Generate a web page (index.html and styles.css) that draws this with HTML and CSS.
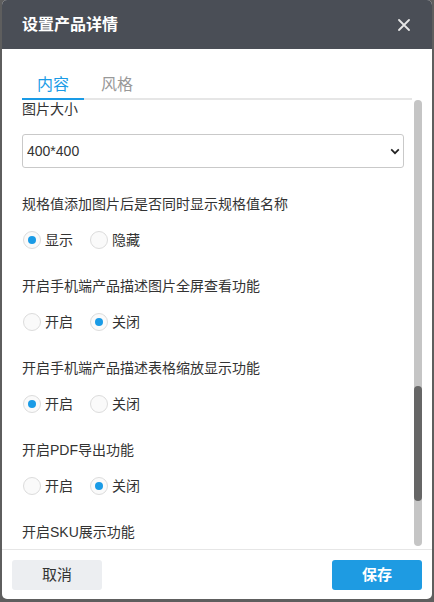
FILE: index.html
```html
<!DOCTYPE html>
<html lang="zh-CN">
<head>
<meta charset="utf-8">
<title>设置产品详情</title>
<link rel="stylesheet" href="styles.css">
</head>
<body>
<div class="dialog">
  <div class="dialog-header">
    <h1 class="dialog-title">设置产品详情</h1>
    <button class="close-btn" aria-label="关闭">
      <svg width="12" height="12" viewBox="0 0 12 12"><path d="M1 1L11 11M11 1L1 11" stroke="#e6e6e6" stroke-width="1.8" stroke-linecap="round"/></svg>
    </button>
  </div>
  <div class="tabs">
    <div class="tab active">内容</div>
    <div class="tab">风格</div>
  </div>
  <div class="scroll-area">
    <div class="content">
      <div class="field first">
        <div class="label">图片大小</div>
        <div class="select-wrap">
          <select class="select"><option>400*400</option></select>
          <svg class="chevron" width="10" height="7" viewBox="0 0 10 7"><path d="M1.2 1.4L5 5.2L8.8 1.4" fill="none" stroke="#222" stroke-width="1.7"/></svg>
        </div>
      </div>
      <div class="field">
        <div class="label">规格值添加图片后是否同时显示规格值名称</div>
        <div class="radios">
          <label class="radio"><span class="dot checked"></span>显示</label>
          <label class="radio"><span class="dot"></span>隐藏</label>
        </div>
      </div>
      <div class="field">
        <div class="label">开启手机端产品描述图片全屏查看功能</div>
        <div class="radios">
          <label class="radio"><span class="dot"></span>开启</label>
          <label class="radio"><span class="dot checked"></span>关闭</label>
        </div>
      </div>
      <div class="field">
        <div class="label">开启手机端产品描述表格缩放显示功能</div>
        <div class="radios">
          <label class="radio"><span class="dot checked"></span>开启</label>
          <label class="radio"><span class="dot"></span>关闭</label>
        </div>
      </div>
      <div class="field">
        <div class="label">开启PDF导出功能</div>
        <div class="radios">
          <label class="radio"><span class="dot"></span>开启</label>
          <label class="radio"><span class="dot checked"></span>关闭</label>
        </div>
      </div>
      <div class="field">
        <div class="label">开启SKU展示功能</div>
      </div>
    </div>
    <div class="scrollbar"><div class="thumb"></div></div>
  </div>
  <div class="dialog-footer">
    <div class="btn btn-cancel" role="button">取消</div>
    <div class="btn btn-save" role="button">保存</div>
  </div>
</div>
</body>
</html>
```
FILE: styles.css
```css
* { box-sizing: border-box; }
html, body { margin: 0; padding: 0; }
body {
  background: #5e5e5e;
  font-family: "Liberation Sans", "Noto Sans CJK SC", sans-serif;
  color: #333;
  height: 602px;
  overflow: hidden;
}
.dialog {
  margin: 0 2px;
  width: 430px;
  height: 599px;
  background: #fff;
  border-radius: 5px;
  overflow: hidden;
  display: flex;
  flex-direction: column;
}
.dialog-header {
  height: 49px;
  flex: none;
  background: #4a4e56;
  display: flex;
  align-items: center;
  justify-content: space-between;
  padding: 0 22px 0 20px;
}
.dialog-title {
  margin: 0;
  font-size: 16px;
  font-weight: bold;
  color: #fff;
  line-height: 20px;
}
.close-btn {
  border: 0;
  background: none;
  padding: 0;
  width: 12px;
  height: 12px;
  display: flex;
}
.tabs {
  flex: none;
  margin: 0 20px;
  padding-top: 24px;
  display: flex;
  gap: 2px;
  border-bottom: 2px solid #e6e6e6;
}
.tab {
  font-size: 16px;
  line-height: 24px;
  padding: 0 15px 1px;
  color: #999;
  margin-bottom: -2px;
  border-bottom: 2px solid transparent;
}
.tab.active {
  color: #1a9be6;
  border-bottom-color: #1a9be6;
}
.scroll-area {
  flex: 1;
  position: relative;
  overflow: hidden;
}
.content {
  padding: 0 28px 0 20px;
}
.field { margin-bottom: 26px; }
.label {
  font-size: 14px;
  line-height: 20px;
  color: #333;
}
.field.first .label { margin-top: -1px; }
.select-wrap {
  position: relative;
  margin-top: 15px;
}
.select {
  appearance: none;
  -webkit-appearance: none;
  width: 100%;
  height: 34px;
  border: 1px solid #c9c9c9;
  border-radius: 3px;
  background: #fff;
  font-family: "Liberation Sans", "Noto Sans CJK SC", sans-serif;
  font-size: 14px;
  color: #333;
  padding: 0 4px;
  display: block;
}
.chevron {
  position: absolute;
  right: 4px;
  top: 14px;
}
.radios {
  margin-top: 16px;
  display: flex;
  gap: 16px;
  height: 20px;
  align-items: center;
}
.radio {
  display: flex;
  align-items: center;
  gap: 4px;
  font-size: 14px;
  line-height: 20px;
  color: #333;
}
.dot {
  width: 18px;
  height: 18px;
  border-radius: 50%;
  border: 1px solid #dcdcdc;
  background: #fafafa;
  display: flex;
  align-items: center;
  justify-content: center;
  margin-left: 1px;
}
.dot.checked::after {
  content: "";
  width: 8px;
  height: 8px;
  border-radius: 50%;
  background: #1a9be6;
}
.scrollbar {
  position: absolute;
  top: 0;
  right: 10px;
  width: 8px;
  height: 446px;
  background: #c5c5c5;
  border-radius: 4px;
}
.thumb {
  margin-top: 286px;
  height: 115px;
  background: #666;
  border-radius: 4px;
}
.dialog-footer {
  flex: none;
  height: 50px;
  border-top: 1px solid #e6e6e6;
  display: flex;
  justify-content: space-between;
  align-items: flex-start;
  padding: 10px 10px 0;
}
.btn {
  width: 90px;
  height: 30px;
  border-radius: 3px;
  font-size: 15px;
  line-height: 20px;
  display: flex;
  align-items: center;
  justify-content: center;
  cursor: pointer;
}
.btn-cancel {
  background: #eceef1;
  color: #333;
}
.btn-save {
  background: #1e9be2;
  color: #fff;
  font-weight: bold;
}
```
